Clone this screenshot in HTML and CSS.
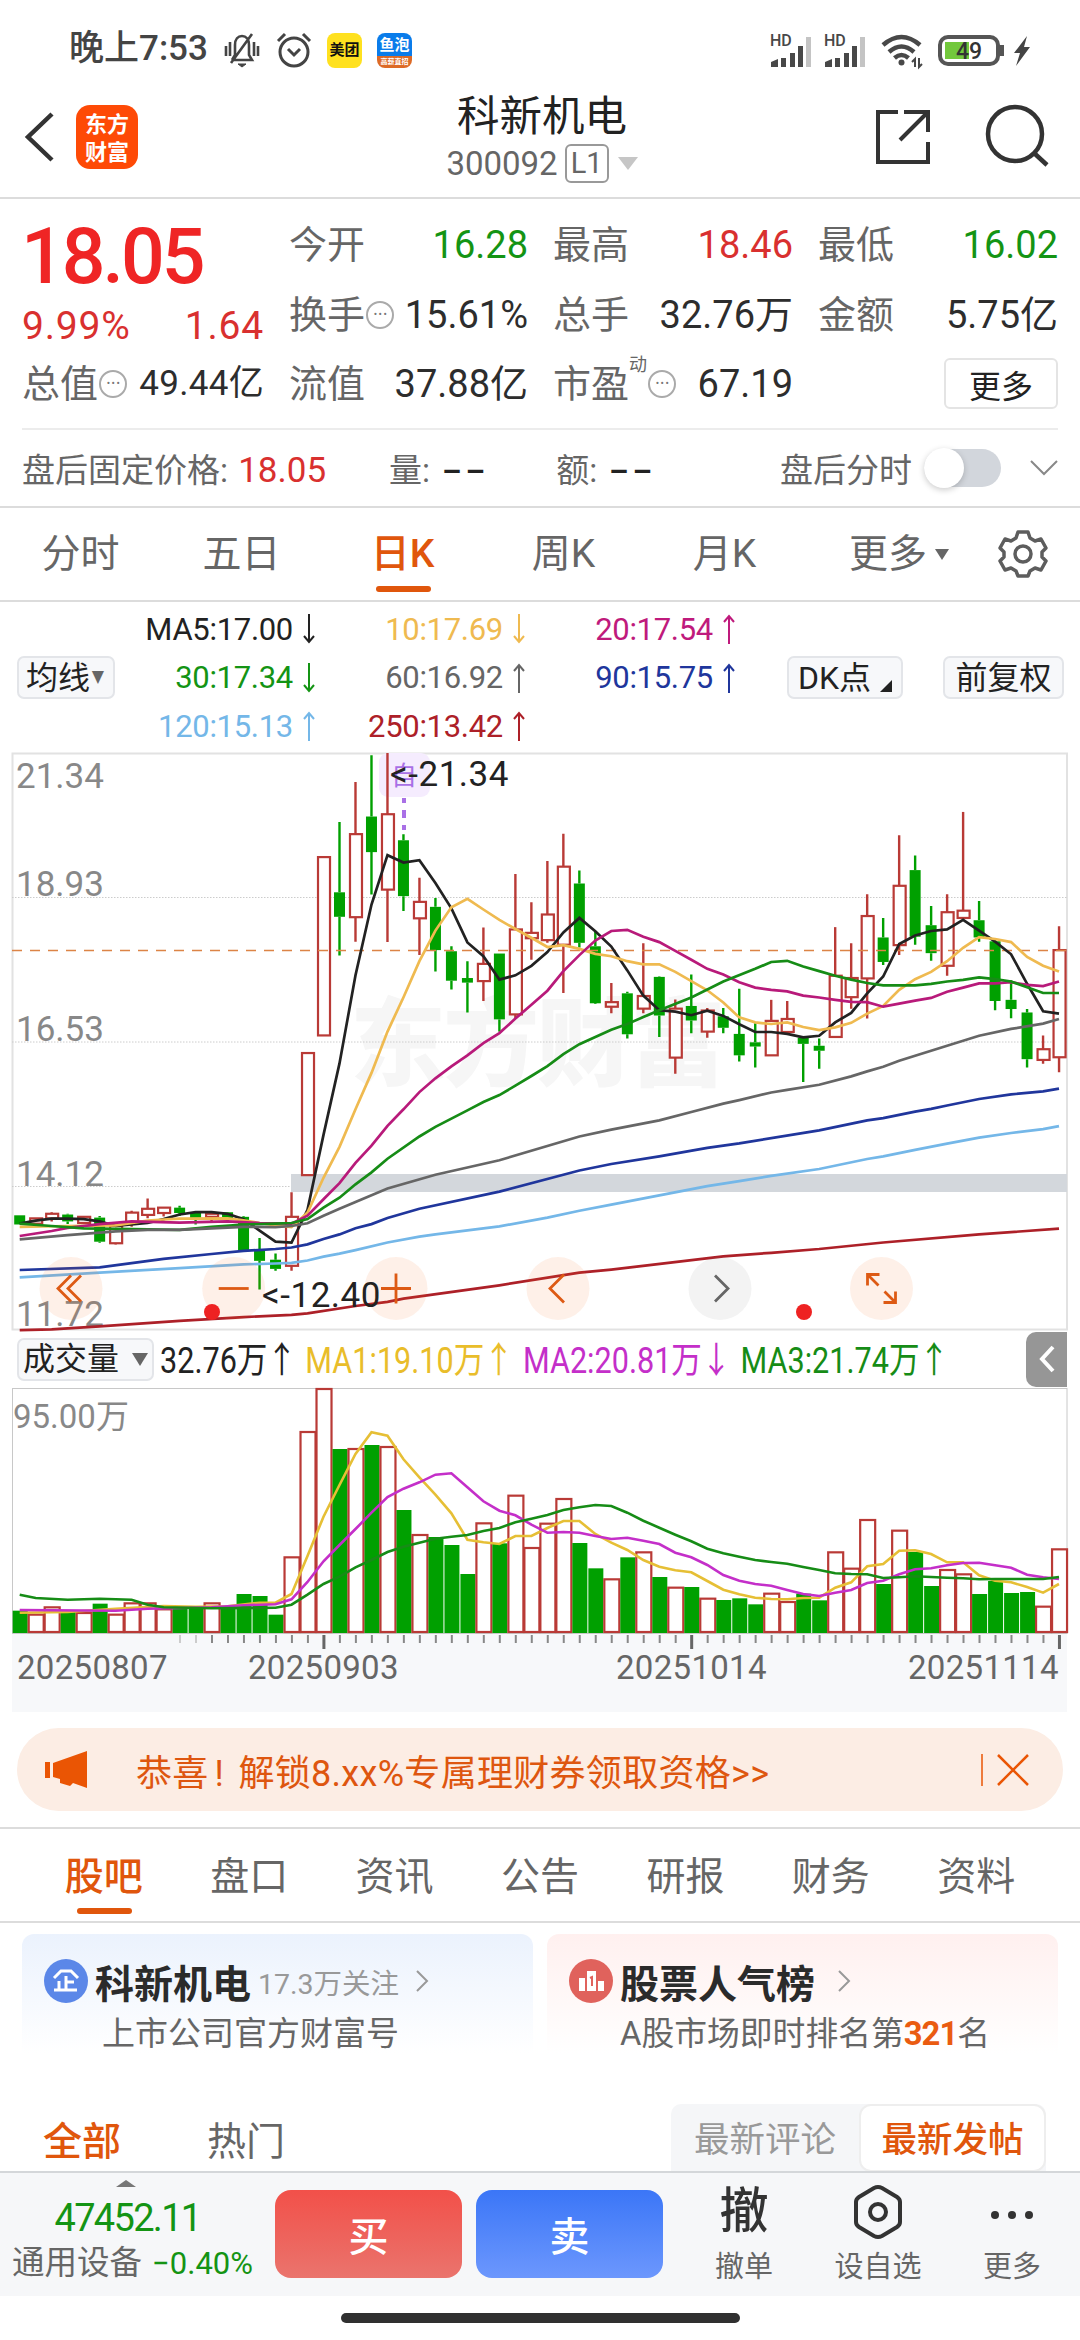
FILE: index.html
```html
<!DOCTYPE html>
<html lang="zh-CN">
<head>
  <meta charset="UTF-8">
  <meta name="viewport" content="width=device-width, initial-scale=1.0">
  <title>科新机电 300092</title>
  <link rel="stylesheet" href="styles.css">
</head>
<body>
  <div class="status">
    <span class="clock">晚上7:53</span>
    <svg class="bell" width="36" height="38" viewBox="0 0 36 38" fill="none" stroke="#444" stroke-width="2.6">
      <path d="M8 29h20l-3-5V14c0-6-3-9-7-9s-7 3-7 9v10l-3 5M7 32L28 3"/>
      <path d="M14 33h8l-4 3z" fill="#444" stroke-width="1"/>
      <path d="M2 15v10M6 11v14M34 15v10M30 11v14"/>
    </svg>
    <svg class="alarm" width="36" height="38" viewBox="0 0 36 38" fill="none" stroke="#444" stroke-width="3">
      <circle cx="18" cy="21" r="14"/><path d="M12 18l6 6 6-6M2 10l7-7M34 10l-7-7"/>
    </svg>
    <span class="app yellow">美团</span>
    <span class="app blue">鱼泡<i>高薪直招</i></span>
    <div class="sys">
      <svg width="44" height="34" viewBox="0 0 44 34"><text x="0" y="12" class="hd">HD</text><g fill="#484848"><path d="M1 33v-5l7-3v8zM11 24h5v9h-5zM20 19h5v14h-5zM28 12h5v21h-5z"/><path d="M36 3h5v30h-5z" fill="#c4c4c4"/></g></svg>
      <svg width="44" height="34" viewBox="0 0 44 34"><text x="0" y="12" class="hd">HD</text><g fill="#484848"><path d="M1 33v-5l7-3v8zM11 24h5v9h-5zM20 19h5v14h-5zM28 12h5v21h-5z"/><path d="M36 3h5v30h-5z" fill="#c4c4c4"/></g></svg>
      <svg class="wifi" width="44" height="34" viewBox="0 0 44 34" fill="none" stroke="#484848" stroke-width="4.5"><path d="M2 11q18.500-16 37 0M8 18q12.500-11 25 0M13.500 24q7-6 14 0"/><circle cx="20.500" cy="28.500" r="3" fill="#484848" stroke="none"/><path d="M34 33v-8l-3 3M38 24v9l3-3" stroke-width="2"/></svg>
      <svg class="battery" width="70" height="32" viewBox="0 0 70 32"><rect x="2" y="2" width="58" height="27" rx="8" fill="#fff" stroke="#555" stroke-width="4"/><path d="M7 7h24v17H7z" fill="#72c83c"/><path d="M64 10v11" stroke="#555" stroke-width="4"/><text x="18" y="24" class="pct">49</text></svg>
      <svg width="18" height="32" viewBox="0 0 18 32"><path d="M14 1L1 18h6L3 31 17 12h-6z" fill="#444"/></svg>
    </div>
  </div>

  <header class="nav">
    <svg class="back" width="32" height="52" viewBox="0 0 32 52" fill="none" stroke="#333" stroke-width="4.500"><path d="M28 3L4 26l24 23"/></svg>
    <div class="logo">东方<br>财富</div>
    <div class="title">
      <h1>科新机电</h1>
      <p>300092<span class="lv">L1</span><svg width="20" height="14" viewBox="0 0 20 14"><path d="M0 0h20L10 13z" fill="#c6c6c6"/></svg></p>
    </div>
    <svg class="share" width="54" height="54" viewBox="0 0 54 54" fill="none" stroke="#333" stroke-width="4"><path d="M22 2H2v50h50V32M28 2h24v20M24 30L51 3"/></svg>
    <svg class="search" width="64" height="64" viewBox="0 0 64 64" fill="none" stroke="#333" stroke-width="4.500"><circle cx="29" cy="29" r="27"/><path d="M48 48l13 12"/></svg>
  </header>

  <section class="quote">
    <div class="price">
      <b>18.05</b>
      <div class="cell red"><span>9.99%</span><span>1.64</span></div>
    </div>
    <div class="cell"><label>今开</label><span class="green">16.28</span></div>
    <div class="cell"><label>最高</label><span class="red">18.46</span></div>
    <div class="cell"><label>最低</label><span class="green">16.02</span></div>
    <div class="cell"><label>换手<i class="dots">•••</i></label><span>15.61%</span></div>
    <div class="cell"><label>总手</label><span>32.76万</span></div>
    <div class="cell"><label>金额</label><span>5.75亿</span></div>
    <div class="cell small"><label>总值<i class="dots">•••</i></label><span>49.44亿</span></div>
    <div class="cell"><label>流值</label><span>37.88亿</span></div>
    <div class="cell"><label>市盈<sup>动</sup><i class="dots">•••</i></label><span>67.19</span></div>
    <div class="cell"><button class="more">更多</button></div>
  </section>

  <section class="after">
    <span>盘后固定价格: <em class="red">18.05</em></span>
    <span class="qty">量: <em class="none">--</em></span>
    <span class="amt">额: <em class="none">--</em></span>
    <span class="sw-label">盘后分时</span>
    <span class="switch"></span>
    <svg width="28" height="18" viewBox="0 0 28 18" fill="none" stroke="#888" stroke-width="2"><path d="M1 2l13 13L27 2"/></svg>
  </section>

  <nav class="periods">
    <a>分时</a><a>五日</a><a class="on">日K</a><a>周K</a><a>月K</a>
    <a class="drop">更多<svg width="14" height="11" viewBox="0 0 14 11"><path d="M0 0h14L7 11z" fill="#666"/></svg></a>
    <svg class="gear" width="50" height="50" viewBox="0 0 50 50" fill="none" stroke="#5d5d5d" stroke-width="3.500" stroke-linejoin="round"><path d="M20 3h10l2 6 5 3 6-2 5 9-4 4v5l4 4-5 9-6-2-5 3-2 5H20l-2-5-5-3-6 2-5-9 4-4v-5l-4-4 5-9 6 2 5-3z"/><circle cx="25" cy="25" r="8"/></svg>
  </nav>

  <section class="ma">
    <button class="tag">均线<i>▼</i></button>
    <div class="ma-grid" id="maGrid"></div>
    <button class="tag dk">DK点<svg width="12" height="12" viewBox="0 0 12 12"><path d="M12 0v12H0z" fill="#222"/></svg></button>
    <button class="tag fq">前复权</button>
  </section>

  <svg class="chart" id="kline" width="1080" height="577" viewBox="0 0 1080 577"></svg>

  <div class="vol-head">
    <button class="tag">成交量<svg width="16" height="13" viewBox="0 0 16 13"><path d="M0 0h16L8 13z" fill="#666"/></svg></button>
    <div class="vol-ma"><span>32.76万<i>↑</i></span><span class="v1">MA1:19.10万<i>↑</i></span><span class="v2">MA2:20.81万<i>↓</i></span><span class="v3">MA3:21.74万<i>↑</i></span></div>
    <div class="fold"><svg width="18" height="28" viewBox="0 0 18 28" fill="none" stroke="#fff" stroke-width="4"><path d="M15 2L4 14l11 12"/></svg></div>
  </div>
  <svg class="chart" id="volume" width="1080" height="324" viewBox="0 0 1080 324"></svg>

  <div class="banner">
    <svg width="44" height="38" viewBox="0 0 44 38" fill="#ea5504"><path d="M0 11h5v16H0zM8 12L42 0v37L28 32l-3 3-10-3v-4l-7-2z"/></svg>
    <p>恭喜<i>!</i> 解锁8.xx%专属理财券领取资格&gt;&gt;</p>
    <svg class="close" width="50" height="34" viewBox="0 0 50 34" fill="none" stroke="#ea5504" stroke-width="2.500"><path d="M1 1v32" stroke-width="1.500"/><path d="M17 2l30 30M47 2L17 32"/></svg>
  </div>

  <nav class="tabs">
    <a class="on">股吧</a><a>盘口</a><a>资讯</a><a>公告</a><a>研报</a><a>财务</a><a>资料</a>
  </nav>

  <section class="cards">
    <div class="card c1">
      <h3><svg width="44" height="44" viewBox="0 0 44 44"><circle cx="22" cy="22" r="22" fill="#5b87e8"/><path d="M10 19L17 12h10l7 7M22 17v14M22 23h8M15 22v9M10 31h23" fill="none" stroke="#fff" stroke-width="3"/></svg>科新机电<small>17.3万关注</small><svg class="go" width="14" height="22" viewBox="0 0 14 22" fill="none" stroke="#999" stroke-width="2"><path d="M2 1l10 10L2 21"/></svg></h3>
      <p>上市公司官方财富号</p>
    </div>
    <div class="card c2">
      <h3><svg width="44" height="44" viewBox="0 0 44 44"><circle cx="22" cy="22" r="22" fill="#e0625c"/><path d="M10 19h6v13h-6zM18 12h9v20h-9zM29 22h6v10h-6z" fill="#fff"/><path d="M21 19l2-1v9" fill="none" stroke="#e0625c" stroke-width="2"/></svg>股票人气榜<svg class="go" width="14" height="22" viewBox="0 0 14 22" fill="none" stroke="#999" stroke-width="2"><path d="M2 1l10 10L2 21"/></svg></h3>
      <p>A股市场即时排名第<b>321</b>名</p>
    </div>
  </section>

  <div class="feed">
    <a class="on">全部</a><a>热门</a>
    <div class="seg"><span>最新评论</span><span class="on">最新发帖</span></div>
  </div>

  <footer class="bar">
    <div class="index">
      <svg width="20" height="7" viewBox="0 0 20 7"><path d="M0 7L10 0l10 7z" fill="#777"/></svg>
      <strong>47452.11</strong>
      <p>通用设备 <em>−0.40%</em></p>
    </div>
    <button class="buy">买</button>
    <button class="sell">卖</button>
    <div class="act"><b>撤</b><span>撤单</span></div>
    <div class="act"><svg width="50" height="54" viewBox="0 0 50 54" fill="none" stroke="#333" stroke-width="4"><path d="M21 3q4-2 8 0l15 9q3 2 3 5v20q0 3-3 5l-15 9q-4 2-8 0L6 42q-3-2-3-5V17q0-3 3-5z"/><circle cx="25" cy="27" r="8"/></svg><span>设自选</span></div>
    <div class="act"><svg width="50" height="54" viewBox="0 0 50 54" fill="#333"><circle cx="8" cy="30" r="4"/><circle cx="25" cy="30" r="4"/><circle cx="42" cy="30" r="4"/></svg><span>更多</span></div>
  </footer>
  <div class="home"></div>
  <script src="chart.js"></script>
</body>
</html>
```
FILE: styles.css
```css
* { box-sizing: border-box; margin: 0; padding: 0; }
body {
  width: 1080px;
  height: 2340px;
  overflow: hidden;
  background: #fff;
  color: #333;
  font-family: Roboto, "Noto Sans CJK SC", sans-serif;
}
svg { display: block; flex: none; overflow: visible; }
button { font-family: inherit; border: none; }
i, em { font-style: normal; }
.red { color: #d9302f; }
.green { color: #149414; }

/* status bar */
.status { display: flex; align-items: center; height: 100px; padding: 0 49px 0 69px; }
.clock { width: 140px; font-size: 35px; font-weight: 500; color: #444; white-space: nowrap; line-height: 50px; padding-bottom: 2px; }
.bell { margin-left: 15px; }
.alarm { margin-left: 16px; }
.app { width: 35px; height: 35px; margin-left: 15px; border-radius: 8px; background: #ffe11f; color: #111; font-size: 15px; font-weight: 700; line-height: 35px; text-align: center; white-space: nowrap; overflow: hidden; }
.app.blue { background: linear-gradient(#0a7cea 66%, #dd6a26 66%); color: #fff; line-height: 25px; }
.app.blue i { display: block; font-size: 7px; line-height: 9px; }
.sys { display: flex; align-items: center; margin-left: auto; padding-top: 2px; }
.sys svg + svg { margin-left: 10px; }
.sys .wifi { margin-left: 13px; }
.sys .battery { margin-left: 13px; }
.sys .battery + svg { margin-left: 5px; }
.hd { font-size: 16px; font-weight: 500; fill: #484848; }
.pct { font-size: 23px; font-weight: 500; fill: #333; }

/* title */
.nav { display: flex; align-items: center; height: 99px; padding: 0 28px 24px 24px; border-bottom: 2px solid #dcdcdc; }
.logo { width: 62px; height: 64px; margin-left: 20px; border-radius: 14px; background: #fe4a06; color: #fff; font: 700 22px/28px "Noto Sans CJK SC", sans-serif; text-align: center; padding-top: 3px; }
.title { width: 300px; margin-left: 254px; text-align: center; padding-top: 4px; }
.title h1 { font-size: 42.500px; font-weight: 400; line-height: 50px; color: #222; }
.title p { display: flex; align-items: center; justify-content: center; font-size: 33px; line-height: 44px; color: #666; }
.lv { margin: 0 9px 0 7px; padding: 0 4px; border: 2px solid #999; border-radius: 6px; font-size: 29px; line-height: 35px; }
.nav .share { margin-left: 184px; }
.nav .search { margin-left: 56px; }

/* quote */
.quote { display: grid; grid-template-columns: 242px 239px 240px 240px; grid-template-rows: 70px 69px 69px; column-gap: 25px; height: 229px; padding: 11px 22px 0; }
.price { grid-row: 1 / 3; }
.price b { display: block; height: 90px; margin-left: -1px; font-size: 77px; font-weight: 500; line-height: 94px; letter-spacing: -3px; color: #ef2525; }
.cell { display: flex; align-items: center; justify-content: space-between; font-size: 38px; line-height: 60px; color: #2d2d2d; white-space: nowrap; }
.cell.red, .cell .red { color: #d9302f; }
.cell .green { color: #149414; }
.cell label { display: flex; align-items: center; color: #666; }
.price .cell { margin-top: -4px; font-size: 39px; letter-spacing: .8px; }
.cell.small span { font-size: 35px; letter-spacing: .3px; }
.dots { width: 28px; height: 28px; margin-left: 1px; border: 2px solid #aaa; border-radius: 50%; font-size: 10px; line-height: 24px; text-align: center; color: #777; letter-spacing: 1.500px; padding-left: 2px; }
.cell sup { align-self: flex-start; font-size: 18px; line-height: 22px; }
.more { margin-left: auto; width: 114px; height: 51px; border: 2px solid #e4e4e4; border-radius: 6px; background: #fff; font-size: 32px; color: #222; }

.after { display: flex; align-items: center; height: 78px; margin: 0 22px; border-top: 2px solid #ececec; font-size: 33px; color: #666; white-space: nowrap; }
.after em { margin-left: 2px; font-size: 35px; }
.after .none { display: inline-block; width: 44px; margin-left: 4px; color: #222; font-weight: 500; letter-spacing: 2px; transform: scaleX(1.7); transform-origin: left; }
.after .red { color: #d9302f; }
.qty { margin-left: 63px; }
.amt { margin-left: 70px; }
.sw-label { margin-left: auto; }
.switch { position: relative; width: 77px; height: 38px; margin: 0 29px 0 12px; border-radius: 19px; background: #d2d6dc; }
.switch::before { content: ""; position: absolute; left: 0; top: -1px; width: 40px; height: 40px; border-radius: 50%; background: #fff; box-shadow: 0 2px 6px #0003; }

/* period tabs */
.periods { display: flex; align-items: center; height: 96px; border-top: 2px solid #dcdcdc; border-bottom: 2px solid #dcdcdc; font-size: 39px; color: #666; }
.periods a { position: relative; width: 161px; line-height: 92px; text-align: center; }
.periods .on { color: #e0560c; font-weight: 500; }
.periods .on::after, .tabs .on::after { content: ""; position: absolute; left: 50%; bottom: 8px; width: 55px; height: 6px; margin-left: -27px; border-radius: 3px; background: #e0560c; }
.tabs .on::after { bottom: 7px; }
.periods .drop { display: flex; align-items: center; justify-content: center; width: 184px; padding-left: 4px; gap: 8px; }
.gear { margin-left: 9px; }

/* moving average legend */
.ma { display: flex; align-items: center; height: 151px; padding-left: 17px; }
.tag { display: flex; align-items: center; justify-content: center; width: 98px; height: 43px; border: 2px solid #e3e5e9; border-radius: 7px; background: #f7f8fa; font-size: 32px; line-height: 38px; color: #222; white-space: nowrap; }
.tag i { font-size: 16px; color: #666; transform: scaleX(.8); }
.dk { width: 116px; margin-left: 51px; gap: 9px; }
.dk svg { align-self: flex-end; margin-bottom: 5px; }
.fq { width: 121px; margin-left: 40px; }
.ma-grid { display: grid; grid-template-columns: 201px 210px 210px; grid-auto-rows: 48.500px; }
.ma-grid div { display: flex; align-items: center; justify-content: flex-end; gap: 9px; font-size: 31px; letter-spacing: -.3px; }

/* charts */
.grid-label { font-size: 35px; fill: #888; }
.mark { font-size: 35px; fill: #222; letter-spacing: .5px; }
.axis { font-size: 33px; fill: #666; letter-spacing: .3px; }
.vol-max { font-size: 33px; fill: #888; }
.self { font-size: 26px; fill: #a970e6; }
.water { font-size: 96px; font-weight: 900; fill: #f6f6f6; }
.vol-head { display: flex; align-items: center; height: 58px; padding: 0 13px 0 17px; }
.vol-head .tag { width: 137px; gap: 13px; }
.vol-ma { display: flex; width: 872px; margin-left: 6px; font-size: 36px; line-height: 50px; color: #222; white-space: nowrap; transform: scaleX(.85); transform-origin: left; }
.vol-ma span { flex: none; width: 256px; }
.vol-ma span:first-child { width: 171px; }
.vol-ma i { display: inline-block; width: 30px; margin-left: -1px; font-family: "Noto Sans CJK SC", sans-serif; }
.vol-ma .v1 { color: #e9bd2a; }
.vol-ma .v2 { color: #c42fc9; }
.vol-ma .v3 { color: #168c16; }
.fold { display: flex; align-items: center; justify-content: center; width: 41px; height: 55px; margin-left: -6px; border-radius: 10px 0 0 10px; background: #969696; }

/* banner */
.banner { display: flex; align-items: center; height: 83px; margin: 16px 17px 0; padding: 0 32px 0 28px; border-radius: 42px; background: #fcede4; color: #de560f; }
.banner p { margin-left: 47px; font-size: 36px; white-space: nowrap; letter-spacing: .3px; }
.banner p i { margin: 0 5px 0 6px; }
.close { margin-left: auto; }

.tabs { display: grid; grid-template-columns: repeat(7, 1fr); height: 96px; margin-top: 16px; padding: 0 31px; border-top: 2px solid #dcdcdc; border-bottom: 2px solid #dcdcdc; font-size: 39px; color: #666; text-align: center; line-height: 96px; }
.tabs a { position: relative; height: 92px; }
.tabs .on { color: #e0560c; font-weight: 500; }

.cards { display: grid; grid-template-columns: 511px 511px; gap: 14px; padding: 11px 22px 0; }
.card { height: 150px; padding: 21px 22px; border-radius: 12px; }
.c1 { background: linear-gradient(#ebf2fd, #fff 80%); }
.c2 { background: linear-gradient(#fff0ef, #fff 80%); }
.card h3 { display: flex; align-items: center; height: 52px; font-size: 39px; font-weight: 700; color: #2b2b2b; white-space: nowrap; }
.card h3 svg:first-child { margin-right: 7px; }
.card small { margin-left: 7px; font-size: 28.500px; font-weight: 400; color: #999; }
.card .go { margin-left: 16px; }
.c2 .go { margin-left: 22px; }
.card p { margin-top: 4px; font-size: 33px; line-height: 46px; color: #666; white-space: nowrap; }
.c1 p { padding-left: 58px; }
.c2 p { padding-left: 51px; font-size: 32.800px; }
.card b { color: #ea5b10; letter-spacing: -1px; }

.feed { display: flex; height: 67px; margin-top: 20px; padding: 0 34px 0 43px; font-size: 39px; line-height: 76px; color: #666; }
.feed a { width: 164px; }
.feed .on { color: #e0560c; font-weight: 500; }
.seg { display: grid; grid-template-columns: 188px 187px; margin-left: auto; height: 100px; border-radius: 10px; background: #f5f6f8; font-size: 35.500px; line-height: 72px; text-align: center; color: #999; }
.seg .on { height: 68px; border: 2px solid #eee; border-radius: 12px; background: #fff; line-height: 68px; }

/* bottom bar */
.bar { position: relative; display: flex; height: 125px; border-top: 2px solid #d4d7da; background: #f6f7f9; }
.index { width: 275px; padding: 7px 0 0 12px; white-space: nowrap; }
.index svg { margin-left: 104px; }
.index strong { display: block; width: 228px; padding-left: 3px; margin-top: 8px; font-size: 38px; font-weight: 400; line-height: 46px; letter-spacing: -1.700px; text-align: center; color: #149414; }
.index p { font-size: 32.500px; line-height: 44px; color: #666; }
.index em { margin-left: 2px; font-size: 31px; color: #149414; }
.buy, .sell { width: 187px; height: 88px; margin-top: 17px; border-radius: 16px; color: #fff; font-size: 40px; font-weight: 500; }
.buy { background: linear-gradient(#f25049, #ea746d); }
.sell { margin: 17px 14px 0; background: linear-gradient(#3b76f7, #6c97fd); }
.act { display: flex; flex-direction: column; align-items: center; width: 134px; padding-top: 12px; font-size: 29px; color: #666; }
.act b { height: 54px; font-size: 49px; font-weight: 500; line-height: 54px; color: #333; }
.act span { margin-top: 8px; line-height: 40px; }
.home { width: 399px; height: 10px; margin: 17px auto 0; border-radius: 5px; background: #303030; }
```
FILE: chart.js
```js
// x of the n-th trading day
const X = i => 19.7 + i * 15.99;
const line = (pts, y, color, w) =>
  `<polyline fill="none" stroke="${color}" stroke-width="${w}" points="${pts.trim().split(/\s+/).map(p => {
    const [i, v] = p.split(':').map(Number);
    return X(i).toFixed(1) + ',' + y(v).toFixed(1);
  }).join(' ')}"/>`;

// legend
const legend = [
  ['MA5:17.00', 0, '#222'], ['10:17.69', 0, '#efba50'], ['20:17.54', 1, '#bf1a7c'],
  ['30:17.34', 0, '#149414'], ['60:16.92', 1, '#666'], ['90:15.75', 1, '#20369c'],
  ['120:15.13', 1, '#74b7e8'], ['250:13.42', 1, '#ad2028']
];
document.getElementById('maGrid').innerHTML = legend.map(([t, up, c]) =>
  `<div style="color:${c}">${t}<svg width="14" height="30" viewBox="0 0 14 30" fill="none" stroke="${c}" stroke-width="2"><path d="${up ? 'M7 30V2M2 8l5-6 5 6' : 'M7 0v28M2 22l5 6 5-6'}"/></svg></div>`).join('');

// direction, high, body top, body bottom, low
const candles = `g 1242 1242 1266 1266|r 1250 1250 1264 1264|r 1234 1238 1250 1258|g 1238 1240 1258 1265|r 1246 1246 1262 1262
|g 1244 1248 1311 1314|r 1268 1270 1315 1318|r 1230 1235 1262 1272|r 1198 1225 1241 1250|r 1222 1222 1236 1245
|g 1217 1222 1236 1244|g 1236 1236 1252 1266|r 1232 1238 1246 1262|g 1234 1234 1252 1256|g 1244 1246 1333 1333
|g 1301 1330 1361 1436|g 1342 1358 1382 1387|r 1182 1246 1374 1387|r 818 818 1137 1137|r 306 306 772 772
|g 214 398 462 563|r 110 246 463 527|g 40 200 293 404|r 34 194 391 528|g 246 262 408 447
|r 360 423 466 562|g 413 436 549 605|g 539 552 629 652|g 578 622 634 712|r 490 585 630 682
|g 558 558 730 762|r 350 495 717 728|r 424 504 518 574|r 316 456 523 530|r 245 331 535 661
|g 341 375 530 542|g 500 539 688 690|r 635 685 697 714|g 658 662 769 780|r 531 669 702 714
|g 618 619 720 776|r 678 702 830 872|g 613 695 733 766|r 700 707 762 778|g 700 722 752 766
|g 650 768 824 840|g 740 790 801 856|r 679 734 824 824|r 682 729 763 770|g 775 778 794 894
|g 780 799 812 859|r 489 616 776 776|r 531 622 672 702|r 403 460 623 728|g 465 516 580 588
|r 249 381 536 562|g 302 340 514 535|g 434 484 557 577|r 403 450 590 616|r 188 446 465 465
|g 421 471 516 527|g 522 526 682 706|g 628 679 703 727|g 703 712 834 856|r 772 808 836 846|r 487 549 829 868`
  .split('|').map(s => s.trim().split(' '));

const ma = [
  ['#222', '0:1264 1:1256 2:1251 3:1251 4:1252 5:1258 6:1270 7:1266 8:1262 9:1252 10:1240 11:1234 12:1234 13:1238 14:1252 15:1282 16:1311 17:1313 18:1228 19:1032 20:845 21:615 22:430 23:301 24:320 25:314 26:374 27:440 28:529 29:565 30:626 31:615 32:590 33:554 34:503 35:465 36:500 37:540 38:602 39:668 40:706 41:710 42:719 43:707 44:721 45:743 46:763 47:763 48:768 49:777 50:773 51:738 52:713 53:662 54:618 55:533 56:511 57:499 58:495 59:470 60:498 61:527 62:560 63:637 64:709 65:715'],
  ['#efba50', '0:1272 3:1270 6:1268 8:1256 9:1253 10:1251 13:1250 14:1255 15:1262 16:1268 17:1273 18:1235 19:1144 20:1063 21:965 22:870 23:762 24:672 25:578 26:498 27:437 28:415 29:443 30:470 31:494 32:517 33:541 34:536 35:546 36:559 37:565 38:578 39:586 40:586 41:606 42:630 43:654 44:686 45:725 46:738 47:742 48:738 49:750 50:758 51:751 52:739 53:715 54:695 55:653 56:625 57:606 58:578 59:543 60:515 61:520 62:528 63:567 64:590 65:605'],
  ['#b81a7a', '0:1296 2:1283 3:1275 5:1265 7:1258 10:1261 13:1258 15:1262 17:1264 18:1243 19:1200 20:1158 21:1105 22:1060 23:1008 24:965 25:920 26:884 27:853 28:824 29:792 30:766 31:728 32:692 33:655 34:604 35:562 36:524 37:499 38:496 39:514 40:528 41:551 42:574 43:598 44:613 45:633 46:647 47:653 48:657 49:668 50:673 51:679 52:684 53:685 54:697 55:689 56:681 57:674 58:658 59:647 60:636 61:636 62:633 63:640 64:643 65:631'],
  ['#168c16', '0:1264 2:1270 4:1276 7:1278 10:1280 12:1272 14:1266 16:1264 17:1262 18:1252 19:1222 20:1196 21:1161 22:1130 23:1094 25:1036 26:1011 28:968 29:946 30:928 31:903 32:878 33:852 34:821 35:795 37:757 38:742 39:724 40:706 42:673 44:631 46:598 47:580 48:577 49:592 50:604 51:616 52:626 53:635 54:641 55:641 56:641 57:637 58:631 59:627 60:620 61:625 62:631 63:646 64:661 65:661'],
  ['#666', '0:1305 3:1294 6:1284 8:1280 10:1280 12:1276 14:1272 16:1273 17:1270 18:1263 19:1243 20:1225 21:1207 23:1172 26:1136 30:1098 35:1036 37:1018 40:994 42:972 44:950 45:941 47:921 48:914 50:901 52:879 53:866 54:854 55:838 56:825 57:812 58:799 60:773 62:755 64:741 65:729'],
  ['#20369c', '0:1385 5:1378 9:1356 12:1343 14:1335 16:1330 17:1326 18:1318 19:1304 20:1292 21:1276 22:1265 23:1249 25:1225 30:1180 35:1125 37:1108 40:1088 43:1066 45:1054 50:1020 53:994 54:988 56:971 57:964 58:955 60:938 62:926 64:918 65:911'],
  ['#74b7e8', '0:1404 5:1392 10:1380 14:1370 16:1368 17:1366 18:1360 19:1350 20:1342 21:1333 23:1313 25:1298 26:1292 30:1271 33:1248 35:1230 37:1214 40:1190 43:1166 45:1153 47:1139 50:1121 53:1095 54:1088 56:1071 58:1055 60:1039 62:1027 64:1017 65:1009'],
  ['#ad2028', '0:1542 2:1540 5:1532 10:1518 14:1508 17:1502 18:1498 21:1479 23:1468 24:1460 30:1425 35:1392 37:1384 44:1349 47:1340 50:1330 54:1313 60:1292 65:1277']
];

const ky = v => (v - 34) / 2.613;
let k = '<text class="water" x="350" y="325" textLength="376">东方财富</text>';
k += '<rect x="12.5" y="0.5" width="1054.5" height="576" fill="none" stroke="#e2e2e2" stroke-width="2"/>';
[144.5, 289, 433.5].forEach(y => k += `<path d="M12 ${y}H1067" stroke="#ccc" stroke-dasharray="1.5 1.5"/>`);
k += '<rect x="291" y="421" width="776" height="18" fill="#d3d7dc"/>';
[[35, '21.34'], [143, '18.93'], [288, '16.53'], [433, '14.12'], [573, '11.72']].forEach(([y, t]) => {
  k += `<text class="grid-label" x="16" y="${y}">${t}</text>`;
});
k += '<rect x="379" y="0" width="51" height="44" rx="9" fill="#f5ecfe"/><text class="self" x="391" y="32">自</text>';
k += '<path d="M404 45V83" stroke="#a970e6" stroke-width="4" stroke-dasharray="5 7 8 7"/>';
candles.forEach(([d, h, t, b, l], i) => {
  const x = X(i), T = ky(t), B = ky(b), c = d === 'r' ? '#b93a36' : '#00a000';
  k += `<path d="M${x} ${ky(h)}V${T}M${x} ${B}V${ky(l)}" stroke="${c}" stroke-width="2.4"/>`;
  k += d === 'r'
    ? `<rect x="${x - 5.5}" y="${T}" width="12" height="${B - T}" fill="#fff" stroke="${c}" stroke-width="2.2"/>`
    : `<rect x="${x - 5.5}" y="${T}" width="11" height="${Math.max(B - T, 3)}" fill="${c}"/>`;
});
k += '<path d="M12 197.5H1067" stroke="#dc8446" stroke-width="1.6" stroke-dasharray="10 8"/>';
ma.forEach(([c, p]) => k += line(p, ky, c, 2.7));

// round control buttons
const ctl = [
  [71, 'M0-13L-13 0 0 13M10-13L-3 0 10 13'], [233.700, 'M-15 0H15'], [396, 'M-15 0H15M0-15V15'],
  [558, 'M6-14L-8 0 6 14'], [720, 'M-5-13L8 0-5 13'], [881.500, 'M-14-3V-14H-2M-14-14L-3-3M14 3V14H2M14 14L3 3']
];
ctl.forEach(([x, d]) => {
  const grey = x === 720;
  k += `<g transform="translate(${x} 535.500)"><circle r="31.500" fill="${grey ? '#888' : '#f26a21'}" fill-opacity=".1"/><path d="${d}" fill="none" stroke="${grey ? '#666' : '#dd5a14'}" stroke-width="2.8"/></g>`;
});
k += '<circle cx="212" cy="559" r="8" fill="#ee2222"/><circle cx="804" cy="559" r="8" fill="#ee2222"/>';
k += '<text class="mark" x="390" y="33">&lt;-21.34</text><text class="mark" x="262" y="554">&lt;-12.40</text>';
document.getElementById('kline').innerHTML = k;

// volume
const vol = [842, 851, 829, 846, 846, 821, 851, 817, 817, 835, 834, 836, 817, 835, 792, 798, 854, 679, 303, 170, 357, 354, 345, 348, 540, 612, 621, 645, 732, 577, 640, 494, 651,
  578, 504, 639, 715, 745, 682, 664, 741, 770, 771, 803, 810, 805, 823, 788, 813, 791, 811, 664, 713, 567, 762, 599, 666, 768, 717, 730, 792, 753, 789, 786, 827, 655];
const vma = [
  ['#e6bf35', '0:848 3:846 6:836 9:828 11:830 13:829 15:818 16:818 17:792 18:678 19:560 20:465 21:372 22:307 23:317 24:388 25:442 26:494 27:550 28:629 29:637 30:642 31:618 32:618 33:594 34:573 35:573 36:612 37:638 38:660 39:690 40:710 41:721 42:727 43:753 44:779 45:793 46:803 47:807 48:808 49:804 50:803 51:773 52:757 53:709 54:702 55:662 56:661 57:672 58:697 59:697 60:736 61:752 62:757 63:771 64:788 65:762'],
  ['#c42fc9', '0:840 6:842 8:836 12:832 14:826 16:823 17:808 18:756 19:694 20:645 21:597 22:548 23:501 24:476 25:457 26:434 27:430 28:472 29:514 30:542 31:556 32:584 33:608 34:606 35:608 36:618 37:627 38:623 39:632 40:642 41:668 42:682 43:705 44:735 45:752 46:762 47:767 48:780 49:792 50:798 51:788 52:780 53:759 54:752 55:733 56:718 57:715 58:706 59:699 60:698 61:706 62:713 63:734 64:742 65:747'],
  ['#168c16', '0:794 1:804 3:809 5:806 7:809 8:824 9:832 12:835 16:833 17:824 18:794 19:762 20:740 21:712 22:690 23:666 24:650 25:638 26:626 27:620 28:615 29:603 30:594 31:577 32:566 33:555 34:540 35:532 36:525 37:528 38:548 39:572 40:593 41:614 42:634 43:656 44:670 45:680 46:690 47:696 48:701 49:711 50:720 51:730 52:732 53:733 54:744 55:742 56:739 57:741 58:743 59:745 60:748 61:747 62:747 63:747 64:747 65:741']
];
const vy = v => (v - 174) / 3;
let s = '<rect x="12" y="246" width="1055" height="78" fill="#f7f8fa"/>';
s += '<rect x="12.5" y="0.5" width="1054.500" height="245" fill="#fff" stroke="#c8c8c8"/>';
s += '<text class="vol-max" x="13" y="40">95.00万</text>';
vol.forEach((v, i) => {
  const x = X(i), y = Math.max(vy(v), 0);
  s += candles[i][0] === 'r'
    ? `<rect x="${x - 7}" y="${y + 1}" width="15" height="${243 - y}" fill="#fff" stroke="#b93a36" stroke-width="2.2"/>`
    : `<rect x="${x - 7}" y="${y}" width="15" height="${245 - y}" fill="#00a000"/>`;
});
vma.forEach(([c, p]) => s += line(p, vy, c, 2.6));
for (let i = 10; i < 66; i++) {
  const big = i === 19 || i === 42 || i === 65;
  s += `<path d="M${X(i) + .4} 247v${big ? 14 : 8}" stroke="${i < 12 ? '#ccc' : big ? '#666' : '#888'}" stroke-width="${big ? 3 : 2}"/>`;
}
[[17, '20250807'], [248, '20250903'], [616, '20251014'], [908, '20251114']].forEach(([x, t]) => s += `<text class="axis" x="${x}" y="291">${t}</text>`);
document.getElementById('volume').innerHTML = s;
```
